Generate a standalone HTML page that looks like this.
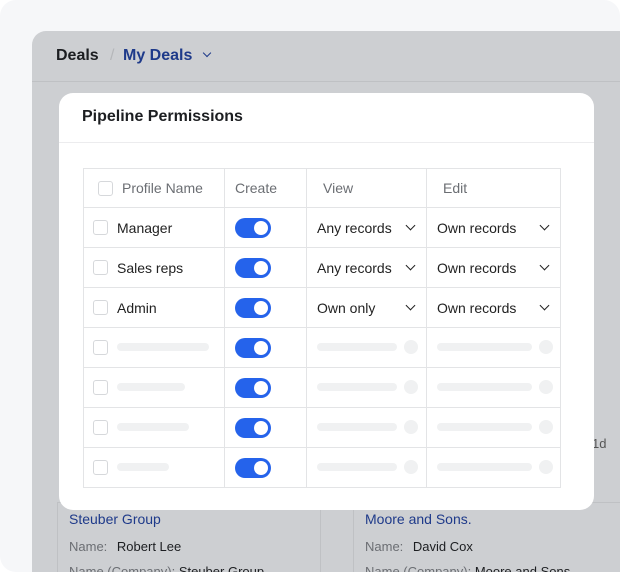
<!DOCTYPE html><html><head><style>
*{box-sizing:border-box;margin:0;padding:0}
body{width:620px;height:572px;background:#fff;font-family:"Liberation Sans",sans-serif;position:relative;overflow:hidden}
.outer{position:absolute;left:0;top:0;width:620px;height:572px;background:#f6f7f9;border-radius:16px}
.app{position:absolute;left:32px;top:31px;width:600px;height:541px;background:#cdcfd2;border-radius:14px 0 0 0;overflow:hidden}
.hdr{position:absolute;left:0;top:0;width:600px;height:51px;border-bottom:1px solid #bfc1c4}
.abs{position:absolute}
.modal{position:absolute;left:59px;top:93px;width:535px;height:417px;background:#fff;border-radius:14px}
table{position:absolute;left:24px;top:75px;border-collapse:collapse;font-size:14px;color:#222}
td{border:1px solid #e3e4e6;height:40px;padding:0;position:relative}
th{border:1px solid #e3e4e6;height:39px;font-weight:normal;color:#6b6e73;text-align:left;font-size:14px}
.f{display:flex;align-items:center;height:38px}
.cb{display:inline-block;width:15px;height:15px;border:1px solid #d6d8db;border-radius:3px;flex:none}
.tg{position:absolute;left:10px;top:10px;width:36px;height:20px;background:#2563eb;border-radius:10px}
.tg:after{content:"";position:absolute;right:3px;top:3px;width:14px;height:14px;background:#fff;border-radius:50%}
.ch{position:absolute;right:12px;top:14px;width:7px;height:7px;border-right:1.5px solid #222;border-bottom:1.5px solid #222;transform:rotate(45deg)}
.bar{position:absolute;height:8px;background:#f0f1f2;border-radius:4px;top:15px}
.dot{position:absolute;width:14px;height:14px;background:#f0f1f2;border-radius:50%;top:12px}
.card{position:absolute;background:#cdcfd2;border:1px solid #bfc1c4;font-size:13px;color:#6b6e73}
</style></head><body>
<div class="outer"></div>
<div class="app">
<div class="hdr">
<div class="abs" style="left:24px;top:16px;font-size:16px;font-weight:bold;color:#1c1e21">Deals</div>
<div class="abs" style="left:78px;top:16px;font-size:16px;color:#b5b7ba">/</div>
<div class="abs" style="left:91px;top:16px;font-size:16px;font-weight:bold;color:#1e3a8a">My Deals</div>
<div class="abs" style="left:172px;top:19px;width:6px;height:6px;border-right:1.5px solid #1e3a8a;border-bottom:1.5px solid #1e3a8a;transform:rotate(45deg)"></div>
</div>
<div class="card" style="left:25px;top:471px;width:264px;height:90px">
<div class="abs" style="left:11px;top:8px;font-size:14px;color:#1e3a8a">Steuber Group</div>
<div class="abs" style="left:11px;top:36px">Name: <span style="color:#1c1e21;margin-left:6px">Robert Lee</span></div>
<div class="abs" style="left:11px;top:61px">Name (Company): <span style="color:#1c1e21">Steuber Group</span></div>
</div>
<div class="card" style="left:321px;top:471px;width:290px;height:90px">
<div class="abs" style="left:11px;top:8px;font-size:14px;color:#1e3a8a">Moore and Sons.</div>
<div class="abs" style="left:11px;top:36px">Name: <span style="color:#1c1e21;margin-left:6px">David Cox</span></div>
<div class="abs" style="left:11px;top:61px">Name (Company): <span style="color:#1c1e21">Moore and Sons</span></div>
</div>
<div class="abs" style="left:560px;top:405px;font-size:13px;color:#555">1d</div>
</div>
<div class="modal">
<div class="abs" style="left:23px;top:15px;font-size:16px;font-weight:bold;color:#1c1e21">Pipeline Permissions</div>
<div class="abs" style="left:0;top:49px;width:535px;height:1px;background:#ececee"></div>
<table>
<tr><th style="width:141px;padding-left:14px"><div class="f"><span class="cb" style="margin-right:9px"></span>Profile Name</div></th><th style="width:82px;padding-left:10px">Create</th><th style="width:120px;padding-left:16px">View</th><th style="width:134px;padding-left:16px">Edit</th></tr>
<tr><td style="padding-left:9px"><div class="f"><span class="cb" style="margin-right:9px"></span>Manager</div></td><td><div class="tg"></div></td><td style="padding-left:10px">Any records<div class="ch"></div></td><td style="padding-left:10px">Own records<div class="ch"></div></td></tr>
<tr><td style="padding-left:9px"><div class="f"><span class="cb" style="margin-right:9px"></span>Sales reps</div></td><td><div class="tg"></div></td><td style="padding-left:10px">Any records<div class="ch"></div></td><td style="padding-left:10px">Own records<div class="ch"></div></td></tr>
<tr><td style="padding-left:9px"><div class="f"><span class="cb" style="margin-right:9px"></span>Admin</div></td><td><div class="tg"></div></td><td style="padding-left:10px">Own only<div class="ch"></div></td><td style="padding-left:10px">Own records<div class="ch"></div></td></tr>
<tr><td style="padding-left:9px"><div class="f"><span class="cb"></span></div><div class="bar" style="left:33px;width:92px"></div></td><td><div class="tg"></div></td><td><div class="bar" style="left:10px;width:80px"></div><div class="dot" style="left:97px"></div></td><td><div class="bar" style="left:10px;width:95px"></div><div class="dot" style="left:112px"></div></td></tr>
<tr><td style="padding-left:9px"><div class="f"><span class="cb"></span></div><div class="bar" style="left:33px;width:68px"></div></td><td><div class="tg"></div></td><td><div class="bar" style="left:10px;width:80px"></div><div class="dot" style="left:97px"></div></td><td><div class="bar" style="left:10px;width:95px"></div><div class="dot" style="left:112px"></div></td></tr>
<tr><td style="padding-left:9px"><div class="f"><span class="cb"></span></div><div class="bar" style="left:33px;width:72px"></div></td><td><div class="tg"></div></td><td><div class="bar" style="left:10px;width:80px"></div><div class="dot" style="left:97px"></div></td><td><div class="bar" style="left:10px;width:95px"></div><div class="dot" style="left:112px"></div></td></tr>
<tr><td style="padding-left:9px"><div class="f"><span class="cb"></span></div><div class="bar" style="left:33px;width:52px"></div></td><td><div class="tg"></div></td><td><div class="bar" style="left:10px;width:80px"></div><div class="dot" style="left:97px"></div></td><td><div class="bar" style="left:10px;width:95px"></div><div class="dot" style="left:112px"></div></td></tr>
</table>
</div>
</body></html>
